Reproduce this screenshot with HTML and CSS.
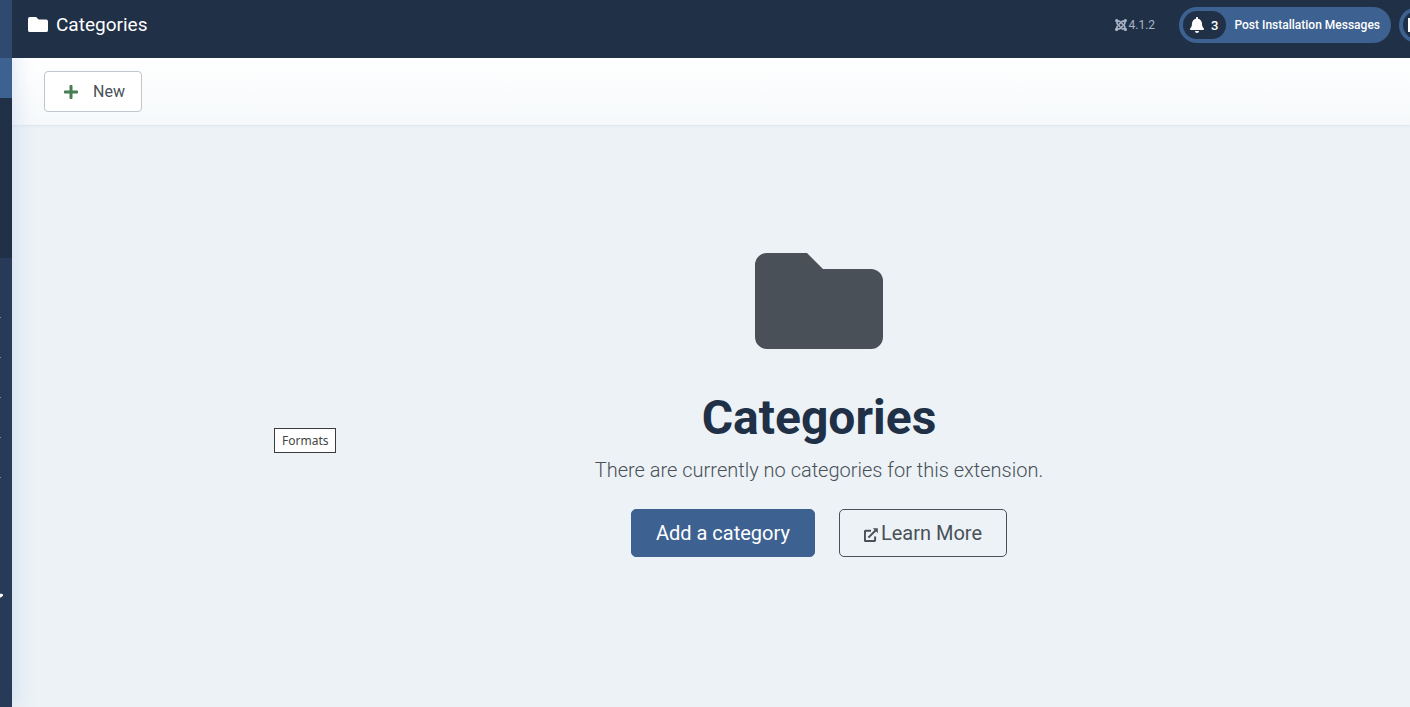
FILE: index.html
```html
<!DOCTYPE html>
<html lang="en">
<head>
  <meta charset="UTF-8">
  <title>Categories</title>
  <link rel="stylesheet" href="styles.css">
</head>
<body>
  <div class="wrapper">
    <!-- Sidebar -->
    <nav class="sidebar" aria-label="Main menu">
      <div class="sidebar-logo"></div>
      <div class="sidebar-toggle"></div>
      <div class="sidebar-main"></div>
      <div class="sidebar-sub">
        <span class="tick"></span>
        <span class="tick"></span>
        <span class="tick"></span>
        <span class="tick"></span>
        <span class="tick"></span>
        <svg class="marker" viewBox="0 0 3 5" aria-hidden="true"><path d="M0 1L1 .5L3 1.5V2.5L1 4.5H0Z"/></svg>
      </div>
    </nav>

    <div class="page">
      <!-- Header -->
      <header class="header">
        <div class="page-title">
          <svg class="icon-folder" viewBox="0 0 128 96" aria-hidden="true"><path d="M12 0H52L68 16H116A12 12 0 0 1 128 28V84A12 12 0 0 1 116 96H12A12 12 0 0 1 0 84V12A12 12 0 0 1 12 0Z"/></svg>
          <h1>Categories</h1>
        </div>
        <div class="header-items">
          <div class="version">
            <svg class="icon-joomla" viewBox="0 32 448 448" aria-hidden="true"><path d="M.6 92.1C.6 58.8 27.4 32 60.4 32c30 0 54.5 21.9 59.2 50.2 32.6-7.6 67.1.6 96.5 30l-44.3 44.3c-20.5-20.5-42.6-16.3-55.4-3.5-14.3 14.3-14.3 37.9 0 52.2l99.5 99.5-44 44.3c-87.7-87.2-49.7-49.7-99.8-99.7-26.8-26.5-35-64.8-24.8-98.9C20.4 144.6.6 120.7.6 92.1zm129.5 116.4l44.3 44.3c10-10 89.7-89.7 99.7-99.8 14.3-14.3 37.6-14.3 51.9 0 12.8 12.8 17 35-3.5 55.4l44 44.3c31.2-31.2 38.5-67.6 28.9-101.2 29.2-4.1 51.9-29.2 51.9-59.5 0-33.2-26.8-60.1-59.8-60.1-30.3 0-55.4 22.5-59.5 51.6-33.8-9.9-71.7-1.5-98.3 25.1-18.3 19.1-71.1 71.5-99.6 99.9zm266.3 152.2c8.2-32.7-.9-68.5-26.3-93.9-11.8-12.2 5 4.7-99.5-99.7l-44.3 44.3 99.7 99.7c14.3 14.3 14.3 37.6 0 51.9-12.8 12.8-35 17-55.4-3.5l-44 44.3c27.6 30.2 68 38.8 102.7 28 5.5 27.4 29.7 48.1 58.9 48.1 33 0 59.8-26.8 59.8-60.1 0-30.2-22.5-55-51.6-59.1zm-84.3-53.1l-44-44.3c-87 86.4-50.4 50.4-99.7 99.8-14.3 14.3-37.6 14.3-51.9 0-13.1-13.4-16.9-35.3 3.2-55.4l-44-44.3c-30.2 30.2-38 65.2-29.5 98.3-26.7 6-46.2 29.9-46.2 58.2C0 453.2 26.8 480 59.8 480c28.6 0 52.5-19.8 58.6-46.7 32.7 8.2 68.5-.6 94.2-26 32.1-32 12.2-12.4 99.5-99.7z"/></svg>
            <span>4.1.2</span>
          </div>
          <a class="pill" href="#">
            <span class="pill-icon">
              <svg class="icon-bell" viewBox="0 0 448 512" aria-hidden="true"><path d="M224 512c35.32 0 63.97-28.65 63.97-64H160.03c0 35.35 28.65 64 63.97 64zm215.39-149.71c-19.32-20.76-55.47-51.99-55.47-154.29 0-77.7-54.48-139.9-127.94-155.16V32c0-17.67-14.32-32-31.98-32s-31.98 14.33-31.98 32v20.84C118.56 68.1 64.08 130.3 64.08 208c0 102.3-36.15 133.53-55.47 154.29-6 6.45-8.66 14.16-8.61 21.71.11 16.4 12.98 32 32.1 32h383.8c19.12 0 32-15.6 32.1-32 .05-7.55-2.61-15.27-8.61-21.71z"/></svg>
              <span>3</span>
            </span>
            <span class="pill-text">Post Installation Messages</span>
          </a>
          <a class="pill" href="#" aria-label="Site preview">
            <span class="pill-icon pill-icon-site">
              <svg class="icon-site" viewBox="0 0 20 14" aria-hidden="true"><path d="M0 0H20V14H0Z"/></svg>
            </span>
          </a>
        </div>
      </header>

      <!-- Toolbar -->
      <div class="toolbar">
        <button type="button" class="btn-new">
          <svg class="icon-plus" viewBox="0 32 448 448" aria-hidden="true"><path d="M416 208H272V64c0-17.67-14.33-32-32-32h-32c-17.67 0-32 14.33-32 32v144H32c-17.67 0-32 14.33-32 32v32c0 17.67 14.33 32 32 32h144v144c0 17.67 14.33 32 32 32h32c17.67 0 32-14.33 32-32V304h144c17.67 0 32-14.33 32-32v-32c0-17.67-14.33-32-32-32z"/></svg>
          New
        </button>
      </div>

      <!-- Empty state -->
      <main class="content">
        <svg class="icon-folder-big" viewBox="0 0 128 96" aria-hidden="true"><path d="M12 0H52L68 16H116A12 12 0 0 1 128 28V84A12 12 0 0 1 116 96H12A12 12 0 0 1 0 84V12A12 12 0 0 1 12 0Z"/></svg>
        <h2>Categories</h2>
        <p>There are currently no categories for this extension.</p>
        <div class="actions">
          <a class="btn btn-primary" href="#">Add a category</a>
          <a class="btn btn-outline" href="#">
            <svg class="icon-external" viewBox="0 0 14 14" aria-hidden="true"><path d="M7 2.8H1.9Q.9 2.8 .9 3.8V12.1Q.9 13.1 1.9 13.1H10.1Q11.1 13.1 11.1 12.1V8.6M4.4 9.6L11.5 2.5"/><path class="head" d="M8.8 .2H13.8V5.2Z"/></svg>
            Learn More
          </a>
        </div>
      </main>
    </div>
  </div>

  <div class="tooltip" role="tooltip">Formats</div>
</body>
</html>
```
FILE: styles.css
```css
* {
  box-sizing: border-box;
}
body {
  margin: 0;
  overflow: hidden;
  font-family: Roboto, sans-serif;
  color: #495057;
  background: #ecf2f6;
}
.wrapper {
  display: flex;
  min-height: 100vh;
}
a {
  text-decoration: none;
}
svg {
  flex: none;
  fill: currentColor;
}

/* Sidebar */
.sidebar {
  position: relative;
  z-index: 1;
  display: flex;
  flex-direction: column;
  flex: none;
  width: 12px;
  background: #273b59;
  box-shadow: 0 0 20px rgba(180, 200, 235, 0.7);
}
.sidebar-logo {
  height: 58px;
  background: #30496e;
}
.sidebar-toggle {
  height: 40px;
  background: #3d6190;
}
.sidebar-main {
  height: 160px;
  background: #203047;
}
.sidebar-sub {
  display: flex;
  flex-direction: column;
  gap: 39px;
  padding-top: 59px;
}
.tick {
  width: 1px;
  height: 1px;
  background: #7f90aa;
}
.marker {
  width: 3px;
  height: 5px;
  margin-top: 76px;
  color: #fff;
}

/* Header */
.page {
  flex: 1;
  min-width: 0;
}
.header {
  position: relative;
  z-index: 2;
  display: flex;
  justify-content: space-between;
  height: 58px;
  padding: 7px 0 15px 16px;
  overflow: hidden;
  color: #fff;
  background: #203047;
}
.page-title {
  display: flex;
  align-items: center;
  gap: 8px;
  padding-bottom: 2px;
}
.page-title h1 {
  margin: 0;
  font-size: 19px;
  font-weight: 400;
}
.icon-folder {
  width: 20px;
  height: 15px;
}
.header-items {
  display: flex;
  align-items: center;
  gap: 8px;
  margin-right: -30px;
}
.version {
  display: flex;
  align-items: center;
  gap: 2px;
  margin-right: 16px;
  font-size: 12px;
  color: #a9b5c6;
}
.icon-joomla {
  width: 12px;
  height: 12px;
}
.pill {
  display: flex;
  align-items: center;
  height: 36px;
  padding: 4px;
  border-radius: 18px;
  font-size: 12px;
  font-weight: 500;
  color: #fff;
  background: #3d6190;
}
.pill-icon {
  display: flex;
  align-items: center;
  gap: 7px;
  height: 28px;
  padding: 0 8px 0 7px;
  border-radius: 14px;
  font-size: 13px;
  background: #203047;
}
.pill-icon-site {
  padding: 0 8px 0 5px;
}
.pill-text {
  padding: 0 7px 0 8px;
}
.icon-bell {
  width: 14px;
  height: 16px;
}
.icon-site {
  width: 20px;
  height: 14px;
}

/* Toolbar */
.toolbar {
  padding: 13px 32px;
  background: linear-gradient(rgba(255, 255, 255, 1), rgba(255, 255, 255, 0.5));
  box-shadow: 0 1px 2px #dbe4f0;
}
.btn-new {
  display: flex;
  align-items: center;
  gap: 15px;
  height: 41px;
  padding: 0 16px 0 19px;
  border: 1px solid #bfc6cd;
  border-radius: 4px;
  font-family: inherit;
  font-size: 16px;
  color: #495057;
  background: #fff;
}
.icon-plus {
  width: 14px;
  height: 14px;
  color: #457d54;
}

/* Empty state */
.content {
  display: flex;
  flex-direction: column;
  align-items: center;
  padding: 128px 0 48px 216px;
  text-align: center;
}
.icon-folder-big {
  width: 128px;
  height: 96px;
}
.content h2 {
  margin: 40px 0 8px;
  font-size: 48px;
  font-weight: 700;
  line-height: 58px;
  color: #203047;
}
.content p {
  margin: 0 0 24px;
  font-size: 20px;
  font-weight: 300;
  line-height: 30px;
}
.actions {
  display: flex;
  gap: 24px;
}
.btn {
  display: flex;
  align-items: center;
  gap: 3px;
  height: 48px;
  padding: 0 24px;
  border: 1px solid #495057;
  border-radius: 5px;
  font-size: 20px;
  color: #495057;
}
.btn-primary {
  border-color: #3d6190;
  color: #fff;
  background: #3d6190;
}
.icon-external {
  width: 14px;
  height: 14px;
  margin-top: 4px;
  fill: none;
  stroke: currentColor;
  stroke-width: 2;
}
.icon-external .head {
  fill: currentColor;
  stroke: none;
}

.tooltip {
  position: absolute;
  top: 428px;
  left: 274px;
  padding: 3px 7px;
  border: 1px solid #3c3c3c;
  font-family: "Noto Sans", sans-serif;
  font-size: 12px;
  line-height: 17px;
  color: #444;
  background: #fff;
}
```
